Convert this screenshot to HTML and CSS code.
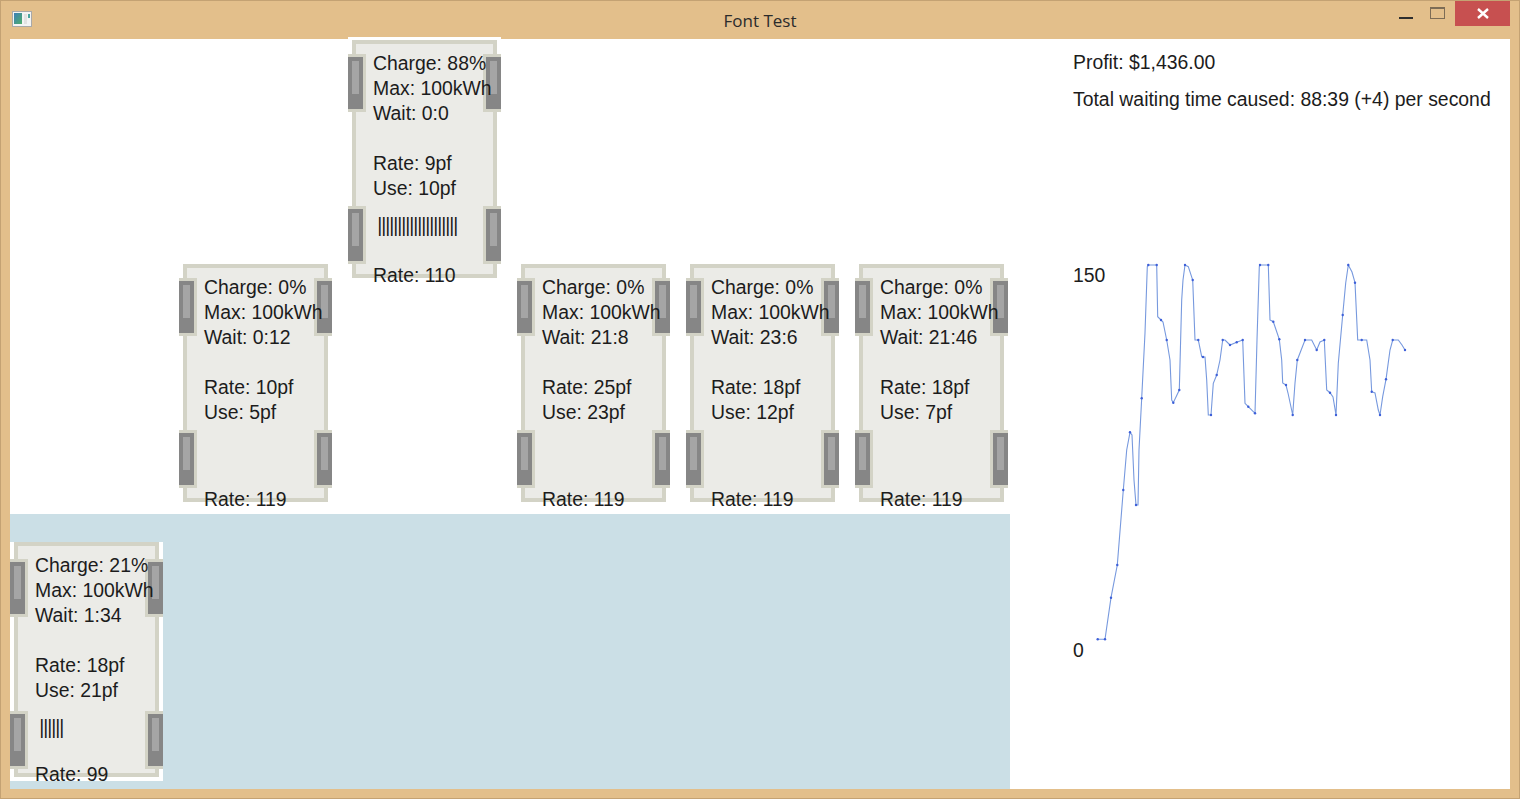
FILE: index.html
```html
<!DOCTYPE html>
<html lang="en">
<head>
<meta charset="utf-8">
<title>Font Test</title>
<link rel="stylesheet" href="styles.css">
</head>
<body>
<div class="window">
  <header class="titlebar">
    <svg class="app-icon" width="20" height="16" viewBox="0 0 20 16">
      <rect x="0.5" y="0.5" width="19" height="15" fill="#f4f4f4" stroke="#a9a9a9"/>
      <defs>
        <linearGradient id="ig" x1="0" y1="0" x2="1" y2="1">
          <stop offset="0" stop-color="#3d7fb8"/>
          <stop offset="1" stop-color="#4fae6a"/>
        </linearGradient>
      </defs>
      <rect x="2" y="2" width="8" height="11" fill="url(#ig)"/>
      <rect x="16" y="3" width="2" height="4" fill="#4aa6a0"/>
      <rect x="12" y="3" width="3" height="10" fill="#e2e2e2"/>
    </svg>
    <div class="title">Font Test</div>
    <div class="controls">
      <div class="ctl-min"></div>
      <div class="ctl-max"></div>
      <div class="ctl-close">
        <svg width="12" height="11" viewBox="0 0 12 11"><path d="M1 1 L11 10 M11 1 L1 10" stroke="#fff" stroke-width="2.4"/></svg>
      </div>
    </div>
  </header>

  <main class="client">
    <section class="game">
      <div class="lot">
        <div class="car slot-r1 col-3">
          <div class="wheel left top"></div><div class="wheel right top"></div>
          <div class="wheel left bottom"></div><div class="wheel right bottom"></div>
          <div class="body">
            <div class="info">
              <div>Charge: 88%</div><div>Max: 100kWh</div><div>Wait: 0:0</div><div>&nbsp;</div><div>Rate: 9pf</div><div>Use: 10pf</div>
            </div>
            <div class="bars"> ||||||||||||||||||||</div>
            <div class="rate">Rate: 110</div>
          </div>
        </div>

        <div class="car slot-r2 col-2">
          <div class="wheel left top"></div><div class="wheel right top"></div>
          <div class="wheel left bottom"></div><div class="wheel right bottom"></div>
          <div class="body">
            <div class="info">
              <div>Charge: 0%</div><div>Max: 100kWh</div><div>Wait: 0:12</div><div>&nbsp;</div><div>Rate: 10pf</div><div>Use: 5pf</div>
            </div>
            <div class="bars"> </div>
            <div class="rate">Rate: 119</div>
          </div>
        </div>

        <div class="car slot-r2 col-4">
          <div class="wheel left top"></div><div class="wheel right top"></div>
          <div class="wheel left bottom"></div><div class="wheel right bottom"></div>
          <div class="body">
            <div class="info">
              <div>Charge: 0%</div><div>Max: 100kWh</div><div>Wait: 21:8</div><div>&nbsp;</div><div>Rate: 25pf</div><div>Use: 23pf</div>
            </div>
            <div class="bars"> </div>
            <div class="rate">Rate: 119</div>
          </div>
        </div>

        <div class="car slot-r2 col-5">
          <div class="wheel left top"></div><div class="wheel right top"></div>
          <div class="wheel left bottom"></div><div class="wheel right bottom"></div>
          <div class="body">
            <div class="info">
              <div>Charge: 0%</div><div>Max: 100kWh</div><div>Wait: 23:6</div><div>&nbsp;</div><div>Rate: 18pf</div><div>Use: 12pf</div>
            </div>
            <div class="bars"> </div>
            <div class="rate">Rate: 119</div>
          </div>
        </div>

        <div class="car slot-r2 col-6">
          <div class="wheel left top"></div><div class="wheel right top"></div>
          <div class="wheel left bottom"></div><div class="wheel right bottom"></div>
          <div class="body">
            <div class="info">
              <div>Charge: 0%</div><div>Max: 100kWh</div><div>Wait: 21:46</div><div>&nbsp;</div><div>Rate: 18pf</div><div>Use: 7pf</div>
            </div>
            <div class="bars"> </div>
            <div class="rate">Rate: 119</div>
          </div>
        </div>
      </div>

      <div class="queue">
        <div class="car queued">
          <div class="wheel left top"></div><div class="wheel right top"></div>
          <div class="wheel left bottom"></div><div class="wheel right bottom"></div>
          <div class="body">
            <div class="info">
              <div>Charge: 21%</div><div>Max: 100kWh</div><div>Wait: 1:34</div><div>&nbsp;</div><div>Rate: 18pf</div><div>Use: 21pf</div>
            </div>
            <div class="bars"> ||||||</div>
            <div class="rate">Rate: 99</div>
          </div>
        </div>
      </div>
    </section>

    <aside class="stats">
      <div class="stat">Profit: $1,436.00</div>
      <div class="stat waiting">Total waiting time caused: 88:39 (+4) per second</div>
      <svg class="chart" width="437" height="420" viewBox="0 0 437 420">
        <text class="axis" x="0" y="25">150</text>
        <text class="axis" x="0" y="400">0</text>
        <polyline class="series" points="24.7,389.3 32,389.3 38,347.7 44.3,315 50.3,240 53.7,200 57,182.3 59,185 61,230 63,255 65,255 66,200 68.7,148.3 72,83 74.3,16.7 75.3,15 83.7,15 84.7,66.7 88,70 90,72 93.7,90 97,110 98.7,150 100.3,152.7 106.3,140 108.7,50 110,30 112,15 115.3,16.7 119.7,30 122,90 125.3,90 128.7,106.7 132,107 133.7,130 135.3,165 138,165 140.3,133.3 143.7,125 147,110 149.7,90 152,90 157,95 163.7,92.3 169.7,90 172,153.3 175.3,156.7 182,163.3 184,90 186.3,16.7 187,15 195.3,15 197,70 200.3,71.7 206.3,89.3 208.7,110 209.7,133 213,135 215,143 219.7,165 222,133 224.3,110 227,103 232,90 238.7,90 243.7,100 247,92 251.3,90 253.7,140 257,142.7 260,147 263,165 265.3,113.3 269.7,65 272.7,33 275.3,15 279,22 282,32.7 284.7,90 288.7,90 293.7,90 297,110 298.7,141.7 302,143 305.3,160 307,165 309.7,146.7 313,129.3 317,100 319.7,90 325.3,90 329,95 332,100"/>
        <g class="dots">
          <circle cx="24.7" cy="389.3" r="1.2"/><circle cx="32" cy="389.3" r="1.2"/><circle cx="38" cy="347.7" r="1.2"/><circle cx="44.3" cy="315" r="1.2"/><circle cx="50.3" cy="240" r="1.2"/><circle cx="57" cy="182.3" r="1.2"/><circle cx="63" cy="255" r="1.2"/><circle cx="68.7" cy="148.3" r="1.2"/><circle cx="75.3" cy="15" r="1.2"/><circle cx="83.7" cy="15" r="1.2"/><circle cx="88" cy="70" r="1.2"/><circle cx="93.7" cy="90" r="1.2"/><circle cx="100.3" cy="152.7" r="1.2"/><circle cx="106.3" cy="140" r="1.2"/><circle cx="112" cy="15" r="1.2"/><circle cx="119.7" cy="30" r="1.2"/><circle cx="125.3" cy="90" r="1.2"/><circle cx="130" cy="107" r="1.2"/><circle cx="138" cy="165" r="1.2"/><circle cx="143.7" cy="125" r="1.2"/><circle cx="149.7" cy="90" r="1.2"/><circle cx="157" cy="95" r="1.2"/><circle cx="163.7" cy="92.3" r="1.2"/><circle cx="169.7" cy="90" r="1.2"/><circle cx="175.3" cy="156.7" r="1.2"/><circle cx="182" cy="163.3" r="1.2"/><circle cx="187" cy="15" r="1.2"/><circle cx="195.3" cy="15" r="1.2"/><circle cx="200.3" cy="71.7" r="1.2"/><circle cx="206.3" cy="89.3" r="1.2"/><circle cx="213" cy="135" r="1.2"/><circle cx="219.7" cy="165" r="1.2"/><circle cx="224.3" cy="110" r="1.2"/><circle cx="232" cy="90" r="1.2"/><circle cx="243.7" cy="100" r="1.2"/><circle cx="251.3" cy="90" r="1.2"/><circle cx="257" cy="142.7" r="1.2"/><circle cx="263" cy="165" r="1.2"/><circle cx="269.7" cy="65" r="1.2"/><circle cx="275.3" cy="15" r="1.2"/><circle cx="282" cy="32.7" r="1.2"/><circle cx="288.7" cy="90" r="1.2"/><circle cx="298.7" cy="141.7" r="1.2"/><circle cx="307" cy="165" r="1.2"/><circle cx="313" cy="129.3" r="1.2"/><circle cx="319.7" cy="90" r="1.2"/><circle cx="332" cy="100" r="1.2"/>
        </g>
      </svg>
    </aside>
  </main>
</div>
</body>
</html>
```

FILE: styles.css
```css
* { box-sizing: border-box; }

html, body {
  margin: 0;
  padding: 0;
}

body {
  width: 1520px;
  height: 799px;
  overflow: hidden;
  font-family: "Liberation Sans", Arial, sans-serif;
  color: #1c1c1c;
}

.window {
  width: 1520px;
  height: 799px;
  background: #e3bf8b;
  border: 1px solid #c4a273;
  display: flex;
  flex-direction: column;
}

/* ---------- title bar ---------- */
.titlebar {
  height: 38px;
  flex: none;
  display: grid;
  grid-template-columns: 1fr auto 1fr;
}

.app-icon {
  margin: 10px 0 0 11px;
  display: block;
}

.title {
  align-self: center;
  font-family: "Open Sans", "Noto Sans", sans-serif;
  font-size: 17px;
  color: #2b2b2b;
  padding-top: 1px;
}

.controls {
  justify-self: end;
  display: flex;
  align-items: flex-start;
  margin-right: 9px;
}

.ctl-min {
  width: 14px;
  height: 2px;
  margin-top: 16px;
  background: #2e2e2e;
}

.ctl-max {
  width: 15px;
  height: 12px;
  margin: 6px 10px 0 17px;
  border: 1px solid #7d6c55;
  border-top-width: 2px;
}

.ctl-close {
  width: 55px;
  height: 25px;
  background: #c75050;
  display: flex;
  align-items: center;
  justify-content: center;
}

.ctl-close svg { display: block; }

/* ---------- client ---------- */
.client {
  margin: 0 9px 9px 9px;
  height: 750px;
  background: #ffffff;
  display: flex;
}

.game {
  width: 1000px;
  display: flex;
  flex-direction: column;
}

.lot {
  height: 475px;
  flex: none;
  display: grid;
  grid-template-columns: repeat(6, 153px);
  column-gap: 16px;
  grid-template-rows: 222px 253px;
  align-items: start;
}

.slot-r1 { grid-row: 1; margin-top: -2px; }
.slot-r2 { grid-row: 2; }
.col-2 { grid-column: 2; }
.col-3 { grid-column: 3; }
.col-4 { grid-column: 4; }
.col-5 { grid-column: 5; }
.col-6 { grid-column: 6; }

.queue {
  flex: 1;
  background: #cbdfe6;
  padding-top: 25px;
}

/* ---------- car ---------- */
.car {
  position: relative;
  width: 153px;
  height: 240px;
  background: #ffffff;
  font-size: 19.4px;
  line-height: 25px;
}

.car.queued { height: 239px; }
.car.queued .body { height: 235px; }

.body {
  margin: 3px 4px 0;
  height: 238px;
  border: 4px solid #d3d3c6;
  background: #ebebe7;
  padding: 7px 0 0 17px;
  display: flex;
  flex-direction: column;
}

.info, .bars, .rate {
  position: relative;
  z-index: 2;
  white-space: nowrap;
}

.bars {
  margin-top: 12px;
  height: 25px;
  letter-spacing: -1.044px;
  white-space: pre;
}

.rate {
  margin-top: auto;
  margin-bottom: -14px;
}

.wheel {
  position: absolute;
  z-index: 1;
  width: 18px;
  height: 58px;
  background: #868686;
  border: 3px solid #d3d3c6;
}

.wheel::after {
  content: "";
  position: absolute;
  left: 4px;
  top: 4px;
  width: 7px;
  height: 33px;
  background: #a5a5a5;
}

.wheel.left { left: 0; border-left: 0; }
.wheel.right { right: 0; border-right: 0; }
.wheel.top { top: 17px; }
.wheel.bottom { top: 169px; }

/* ---------- stats ---------- */
.stats {
  flex: 1;
  padding: 11px 0 0 63px;
  font-size: 19.4px;
  line-height: 25px;
}

.waiting { margin-top: 12px; }

.chart {
  display: block;
  margin-top: 138px;
  overflow: visible;
}

.axis {
  font-family: "Liberation Sans", Arial, sans-serif;
  font-size: 19.4px;
  fill: #1c1c1c;
  dominant-baseline: central;
}

.series {
  fill: none;
  stroke: #7799de;
  stroke-width: 1.1;
}

.dots circle { fill: #3d5fd9; }
```
